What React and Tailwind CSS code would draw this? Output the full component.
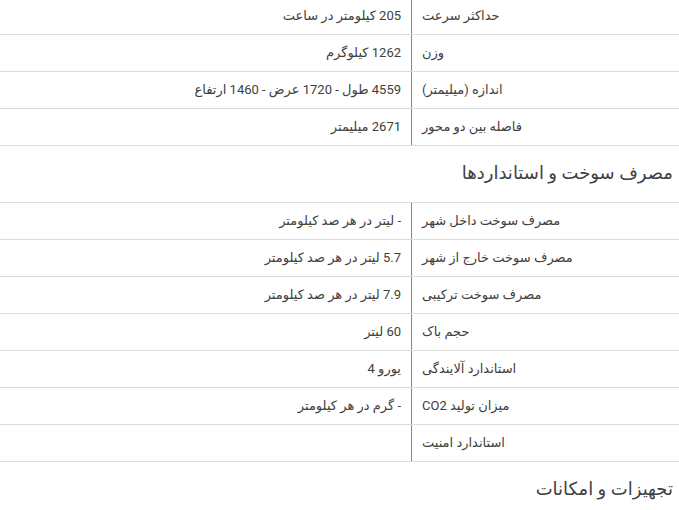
const general = [
  ['حداکثر سرعت', '205 کیلومتر در ساعت'],
  ['وزن', '1262 کیلوگرم'],
  ['اندازه (میلیمتر)', '4559 طول - 1720 عرض - 1460 ارتفاع'],
  ['فاصله بین دو محور', '2671 میلیمتر'],
]

const fuel = [
  ['مصرف سوخت داخل شهر', '- لیتر در هر صد کیلومتر'],
  ['مصرف سوخت خارج از شهر', '5.7 لیتر در هر صد کیلومتر'],
  ['مصرف سوخت ترکیبی', '7.9 لیتر در هر صد کیلومتر'],
  ['حجم باک', '60 لیتر'],
  ['استاندارد آلایندگی', 'یورو 4'],
  ['میزان تولید CO2', '- گرم در هر کیلومتر'],
  ['استاندارد امنیت', ''],
]

function SpecTable({ rows, className = '' }) {
  return (
    <div className={`flex flex-col ${className}`}>
      {rows.map(([label, value]) => (
        <div key={label} className="flex h-[37px] border-b border-[#dcdcdc]">
          <div className="w-[267px] flex items-center justify-end pl-[10px] text-[13px]">
            <span>{label}</span>
          </div>
          <div className="w-[412px] border-r border-[#888] flex items-center justify-start pr-[10px] text-[13px]">
            <span>{value}</span>
          </div>
        </div>
      ))}
    </div>
  )
}

export default function App() {
  return (
    <div
      dir="rtl"
      className="w-[679px] h-[510px] overflow-hidden bg-white text-[#404040]"
      style={{ fontFamily: 'Roboto, "DejaVu Sans", sans-serif' }}
    >
      <SpecTable rows={general} className="-mt-[2px]" />
      <h3 className="text-[18px] leading-[26px] pr-[6px] mt-[14px] mb-[16px]">مصرف سوخت و استانداردها</h3>
      <SpecTable rows={fuel} className="border-t border-[#dcdcdc]" />
      <h3 className="text-[18px] leading-[26px] pr-[6px] mt-[14px]">تجهیزات و امکانات</h3>
    </div>
  )
}
